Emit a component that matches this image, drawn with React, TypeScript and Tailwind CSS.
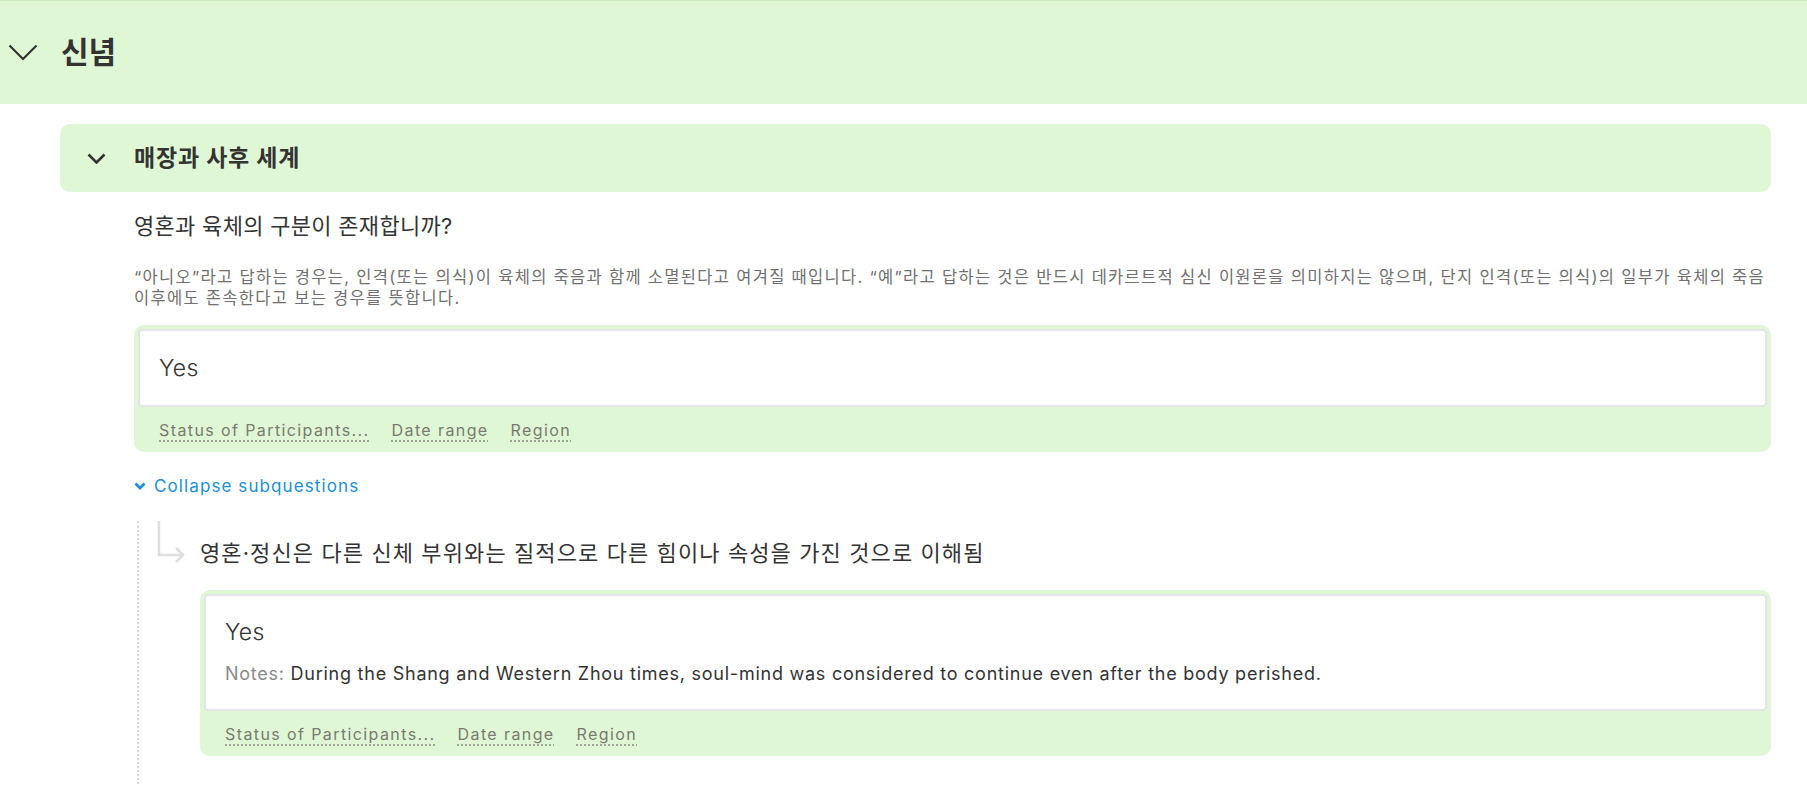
import React from "react";

const FONT = "font-['Inter','Noto_Sans_CJK_KR',sans-serif]";

function ChevronThin() {
  return (
    <svg width="30" height="17" viewBox="0 0 30 17" fill="none">
      <path d="M1.5 1.5 L15 15 L28.5 1.5" stroke="#333" strokeWidth="2.2" />
    </svg>
  );
}

function ChevronSmall() {
  return (
    <svg width="19" height="11" viewBox="0 0 19 11" fill="none">
      <path d="M1.5 1.5 L9.5 9.5 L17.5 1.5" stroke="#333" strokeWidth="2.6" />
    </svg>
  );
}

function ChevronBlue() {
  return (
    <svg width="12" height="8" viewBox="0 0 12 8" fill="none">
      <path d="M1.5 1.5 L6 6 L10.5 1.5" stroke="#1b8fd4" strokeWidth="2.8" />
    </svg>
  );
}

function SubArrow() {
  return (
    <svg width="30" height="44" viewBox="0 0 30 44" fill="none">
      <path d="M2 0 V34 H26" stroke="#dedede" strokeWidth="2.6" />
      <path d="M19 27 L26 34 L19 41" stroke="#dedede" strokeWidth="2.6" />
    </svg>
  );
}

function MetaLinks() {
  const links = ["Status of Participants...", "Date range", "Region"];
  return (
    <div className="flex h-[45px] items-center gap-[22px] pl-[21px]">
      {links.map((l) => (
        <span
          key={l}
          className="text-[16px] tracking-[1.4px] text-[#7a7a72] underline decoration-dotted decoration-[#8a8a80] underline-offset-[5px]"
        >
          {l}
        </span>
      ))}
    </div>
  );
}

function AnswerCard({ notes }: { notes?: string }) {
  return (
    <div className="rounded-[10px] bg-[#dff7d4] px-[4px] pt-[4px]">
      <div
        className={
          "rounded-[4px] border-2 border-[#e4e4e8] bg-white px-[19px] " +
          (notes ? "pt-[21px] pb-[23px]" : "py-[22px]")
        }
      >
        <div className="text-[23px] font-light leading-[30px] tracking-[0.3px] text-[#333]">Yes</div>
        {notes && (
          <div className="mt-[15px] text-[18px] leading-[24px] tracking-[0.75px] text-[#333]">
            <span className="text-[#8a8a8a]">Notes:</span> {notes}
          </div>
        )}
      </div>
      <MetaLinks />
    </div>
  );
}

export default function App() {
  return (
    <div className={"min-h-screen bg-white text-[#333] " + FONT}>
      {/* Section header */}
      <div className="flex h-[104px] items-center gap-[23px] border-t border-[#cdebc0] bg-[#dff7d4] pl-[8px]">
        <ChevronThin />
        <h1 className="text-[30px] font-bold text-[#333]">신념</h1>
      </div>

      <div className="pl-[60px] pr-[36px] pt-[20px]">
        {/* Subsection header */}
        <div className="flex h-[68px] items-center gap-[28px] rounded-[10px] bg-[#dff7d4] pl-[27px]">
          <ChevronSmall />
          <h2 className="text-[23px] font-bold tracking-[0.8px] text-[#333]">매장과 사후 세계</h2>
        </div>

        <div className="pl-[74px]">
          <div className="mt-[19px] text-[22px] leading-[30px] tracking-[0.3px] text-[#333]">
            영혼과 육체의 구분이 존재합니까?
          </div>
          <p className="mt-[26px] text-[16.5px] leading-[21px] tracking-[1.3px] text-[#707070]">
            “아니오”라고 답하는 경우는, 인격(또는 의식)이 육체의 죽음과 함께 소멸된다고 여겨질 때입니다. “예”라고
            답하는 것은 반드시 데카르트적 심신 이원론을 의미하지는 않으며, 단지 인격(또는 의식)의 일부가 육체의 죽음
            이후에도 존속한다고 보는 경우를 뜻합니다.
          </p>

          <div className="mt-[16px]">
            <AnswerCard />
          </div>

          <div className="mt-[22px] flex items-center gap-[8px] text-[17px] leading-[24px] tracking-[1.1px] text-[#1b8fd4]">
            <ChevronBlue />
            <span>Collapse subquestions</span>
          </div>

          {/* Subquestions */}
          <div className="ml-[3px] mt-[23px] border-l-2 border-dotted border-[#d6d6d6] pb-[60px]">
            <div className="flex items-start pl-[18px]">
              <SubArrow />
              <div className="ml-[13px] pt-[17px] text-[22px] leading-[30px] tracking-[1.1px] text-[#333]">
                영혼·정신은 다른 신체 부위와는 질적으로 다른 힘이나 속성을 가진 것으로 이해됨
              </div>
            </div>
            <div className="ml-[61px] mt-[22px]">
              <AnswerCard notes="During the Shang and Western Zhou times, soul-mind was considered to continue even after the body perished." />
            </div>
          </div>
        </div>
      </div>
    </div>
  );
}
